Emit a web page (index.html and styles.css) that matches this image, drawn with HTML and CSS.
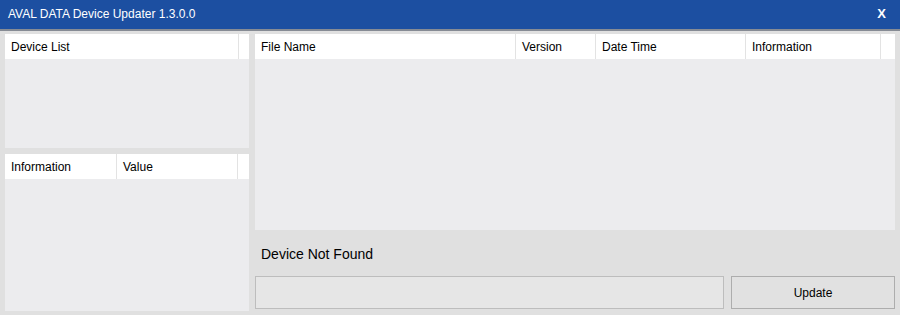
FILE: index.html
```html
<!DOCTYPE html>
<html>
<head>
<meta charset="utf-8">
<title>AVAL DATA Device Updater</title>
<link rel="stylesheet" href="styles.css">
</head>
<body>
<div class="window">
  <div class="titlebar">
    <span class="title">AVAL DATA Device Updater 1.3.0.0</span>
    <span class="close">X</span>
  </div>
  <div class="content">
    <div class="left">
      <div class="list devices">
        <div class="header">
          <div class="col w-dev">Device List</div>
          <div class="col fill"></div>
        </div>
        <div class="body"></div>
      </div>
      <div class="list info">
        <div class="header">
          <div class="col w-info">Information</div>
          <div class="col w-value">Value</div>
          <div class="col fill"></div>
        </div>
        <div class="body"></div>
      </div>
    </div>
    <div class="right">
      <div class="list files">
        <div class="header">
          <div class="col w-file">File Name</div>
          <div class="col w-ver">Version</div>
          <div class="col w-date">Date Time</div>
          <div class="col w-finfo">Information</div>
          <div class="col fill"></div>
        </div>
        <div class="body"></div>
      </div>
      <div class="status">Device Not Found</div>
      <div class="actions">
        <div class="progress"></div>
        <button class="update">Update</button>
      </div>
    </div>
  </div>
</div>
</body>
</html>
```
FILE: styles.css
```css
* { box-sizing: border-box; }
html, body {
  margin: 0;
  padding: 0;
  width: 900px;
  height: 315px;
  overflow: hidden;
  background: #e0e0e0;
  font-family: "Liberation Sans", Arial, sans-serif;
  font-size: 12px;
  color: #000;
}
.window {
  width: 900px;
  height: 315px;
  display: flex;
  flex-direction: column;
}
.titlebar {
  height: 31px;
  flex: none;
  background: #1c4fa1;
  border-bottom: 2px solid #868b94;
  color: #fff;
  display: flex;
  align-items: center;
  justify-content: space-between;
  padding: 0 14px 2px 8px;
}
.title { font-size: 12px; }
.close { font-weight: bold; font-size: 13px; }
.content {
  flex: 1;
  display: flex;
  gap: 6px;
  padding: 3px 5px 4px 5px;
}
.left {
  width: 244px;
  display: flex;
  flex-direction: column;
  gap: 6px;
}
.right {
  width: 640px;
  display: flex;
  flex-direction: column;
}
.list {
  background: #ececee;
  display: flex;
  flex-direction: column;
}
.devices { height: 114px; }
.info { flex: 1; }
.files { height: 196px; }
.header {
  height: 25px;
  background: #fff;
  display: flex;
  flex: none;
}
.col {
  height: 100%;
  display: flex;
  align-items: center;
  padding-left: 6px;
  border-right: 1px solid #e3e3e3;
  white-space: nowrap;
}
.col.fill { flex: 1; border-right: none; }
.w-dev { width: 234px; }
.w-info { width: 112px; }
.w-value { width: 121px; }
.w-file { width: 261px; }
.w-ver { width: 80px; }
.w-date { width: 150px; }
.w-finfo { width: 135px; }
.body { flex: 1; }
.status {
  height: 46px;
  display: flex;
  align-items: center;
  padding-left: 6px;
  padding-top: 2px;
  font-size: 14px;
}
.actions {
  height: 33px;
  display: flex;
  gap: 7px;
}
.progress {
  flex: 1;
  background: #e6e6e6;
  border: 1px solid #bdbdbd;
}
.update {
  width: 164px;
  background: #e1e1e1;
  border: 1px solid #adadad;
  font-family: "Liberation Sans", Arial, sans-serif;
  font-size: 12px;
  color: #000;
  padding: 0;
  margin: 0;
}
```
